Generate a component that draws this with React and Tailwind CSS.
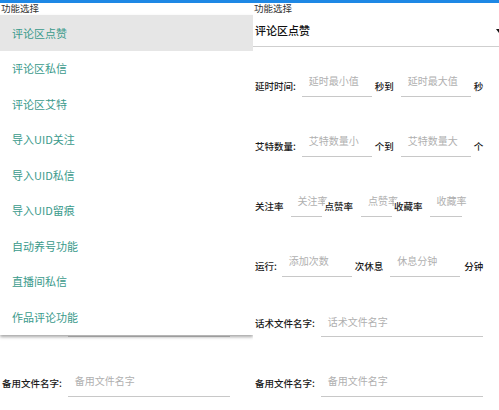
import React from "react";

const FONT = { fontFamily: '"Noto Sans CJK SC", "Noto Sans", sans-serif' };

function Label({ children, className = "" }) {
  return (
    <span className={"text-[9.5px] leading-[12px] text-[#1a1a1a] font-medium whitespace-nowrap " + className}>
      {children}
    </span>
  );
}

function Input({ placeholder, className = "", pb = "pb-[9px]", hideText = false }) {
  return (
    <div className={"h-[30px] border-b border-[#c8c8c8] flex flex-col justify-end pl-[7px] shrink-0 " + pb + " " + className}>
      <span className={"text-[10px] leading-[12px] text-[#b0b0b0] whitespace-nowrap " + (hideText ? "invisible" : "")}>
        {placeholder}
      </span>
    </div>
  );
}

const items = [
  "评论区点赞",
  "评论区私信",
  "评论区艾特",
  "导入UID关注",
  "导入UID私信",
  "导入UID留痕",
  "自动养号功能",
  "直播间私信",
  "作品评论功能",
];

function Form({ covered }) {
  const hid = covered ? "invisible" : "";
  return (
    <div className="w-[251px] shrink-0 flex flex-col">
      <div className="h-[12px] leading-[10px] text-[9.5px] text-[#333] pl-[1px]">功能选择</div>
      <div className={"h-[32px] border-b border-[#cfcfcf] flex items-center pl-[2px] pr-[2px] " + hid}>
        <span className="text-[11px] text-[#111] font-medium">评论区点赞</span>
        <svg className="ml-auto" width="6" height="4" viewBox="0 0 6 4">
          <path d="M0 0 L6 0 L3 4 Z" fill="#111" />
        </svg>
      </div>

      <div className={"mt-[20px] flex items-end h-[30px] pl-[2px] " + hid}>
        <Label className="mb-[5px]">延时时间:</Label>
        <Input placeholder="延时最小值" className="w-[70px] ml-[6px]" />
        <Label className="mb-[5px] ml-[3px]">秒到</Label>
        <Input placeholder="延时最大值" className="w-[70px] ml-[7px]" />
        <Label className="mb-[5px] ml-[3px]">秒</Label>
      </div>

      <div className={"mt-[30px] flex items-end h-[30px] pl-[2px] " + hid}>
        <Label className="mb-[5px]">艾特数量:</Label>
        <Input placeholder="艾特数量小" className="w-[70px] ml-[6px]" />
        <Label className="mb-[5px] ml-[3px]">个到</Label>
        <Input placeholder="艾特数量大" className="w-[70px] ml-[7px]" />
        <Label className="mb-[5px] ml-[3px]">个</Label>
      </div>

      <div className={"mt-[30px] flex items-end h-[30px] pl-[2px] " + hid}>
        <Label className="mb-[5px]">关注率</Label>
        <Input placeholder="关注率" className="w-[31px] ml-[7px] overflow-visible" />
        <Label className="mb-[5px] ml-[3px] relative bg-white">点赞率</Label>
        <Input placeholder="点赞率" className="w-[31px] ml-[8px]" />
        <Label className="mb-[5px] ml-[2px] relative bg-white">收藏率</Label>
        <Input placeholder="收藏率" className="w-[32px] ml-[7px]" />
      </div>

      <div className={"mt-[30px] flex items-end h-[30px] pl-[2px] " + hid}>
        <Label className="mb-[5px]">运行:</Label>
        <Input placeholder="添加次数" className="w-[70px] ml-[5px]" />
        <Label className="mb-[5px] ml-[3px]">次休息</Label>
        <Input placeholder="休息分钟" className="w-[70px] ml-[7px]" />
        <Label className="mb-[5px] ml-[4px]">分钟</Label>
      </div>

      <div className="mt-[30px] flex items-end h-[30px] pl-[2px]">
        <Label className={"mb-[8px] " + hid}>话术文件名字:</Label>
        <Input placeholder="话术文件名字" className="w-[162px] ml-[6px]" pb="pb-[8px]" hideText={covered} />
      </div>

      <div className="mt-[30px] flex items-end h-[30px] pl-[2px]">
        <Label className="mb-[8px]">备用文件名字:</Label>
        <Input placeholder="备用文件名字" className="w-[162px] ml-[6px]" />
      </div>
    </div>
  );
}

function Panel({ open, className = "" }) {
  return (
    <div className={"relative h-[410px] overflow-hidden bg-white shrink-0 " + className}>
      <div className="h-[3px] bg-[#1e88e5]" />
      <Form covered={open} />
      {open && (
        <div className="absolute left-0 right-0 top-[15px] bg-white shadow-[0_2px_3px_rgba(0,0,0,0.35)]">
          {items.map((t, i) => (
            <div
              key={t}
              className={
                "h-[35.5px] flex items-center pl-[12px] text-[11px] text-[#3a9a8b] " +
                (i === 0 ? "bg-[#e6e6e6]" : "")
              }
            >
              {t}
            </div>
          ))}
        </div>
      )}
    </div>
  );
}

export default function App() {
  return (
    <div className="w-[499px] h-[410px] flex bg-white overflow-hidden" style={FONT}>
      <Panel open className="w-[253px]" />
      <Panel className="w-[246px]" />
    </div>
  );
}
